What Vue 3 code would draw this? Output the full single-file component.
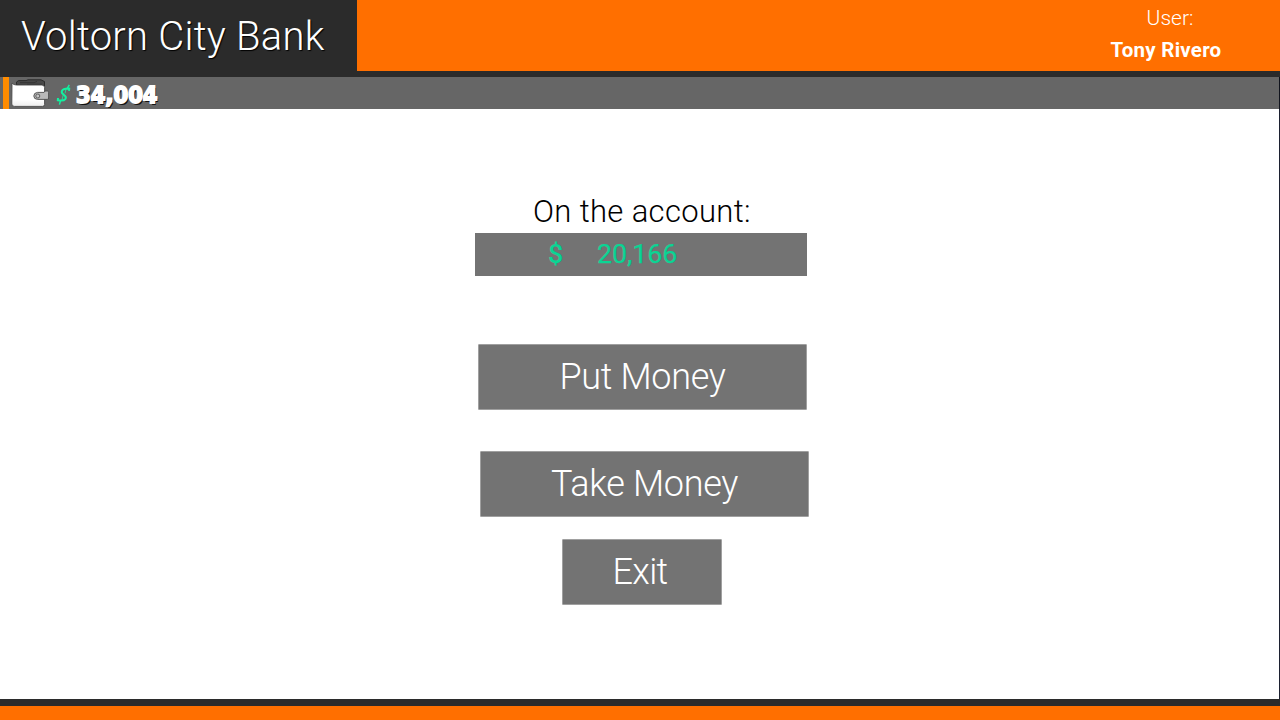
<template>
  <div class="bank">
    <header class="header">
      <div class="brand">
        <h1 class="title">Voltorn City Bank</h1>
      </div>
      <div class="user">
        <span class="user-label">User:</span>
        <span class="user-name">{{ userName }}</span>
      </div>
    </header>

    <div class="wallet-bar">
      <svg class="wallet-icon" width="40" height="32" viewBox="0 0 40 32">
        <defs>
          <linearGradient id="leather" x1="0" y1="0" x2="0" y2="1">
            <stop offset="0" stop-color="#ffffff" />
            <stop offset="0.7" stop-color="#ffffff" />
            <stop offset="1" stop-color="#ececec" />
          </linearGradient>
        </defs>
        <path d="M7.5 8 V5 L9.5 3.6 H17 L19 2.8 H32 L35.5 4.6 V9 Z" fill="#484848" stroke="#2c2c2c" stroke-width="1" />
        <path d="M11 5.7 H25 L28 4.4 M18 7.3 H33" stroke="#303030" stroke-width="0.8" fill="none" />
        <path
          d="M3 6 Q4.4 8 7.5 8 H33 Q35.6 8.2 35.6 10.6 V27.6 Q35.6 29.4 33.4 29.4 H5.4 Q2.8 29.4 2.8 27 Z"
          fill="url(#leather)"
          stroke="#484848"
          stroke-width="0.9"
        />
        <path
          d="M35.4 15 L36 14 H38.4 Q39.6 14 39.6 15.4 V21 Q39.6 22.4 38.4 22.4 H28.5 Q24.8 22.2 24.8 19 Q24.8 15.8 28.5 15.4 H35 Z"
          fill="#b9b9b9"
          stroke="#4c4c4c"
          stroke-width="0.9"
        />
        <circle cx="28.8" cy="19" r="2" fill="#c4c4c4" stroke="#555" stroke-width="0.9" />
      </svg>
      <svg class="cash-icon" width="16" height="24" viewBox="0 0 16 24">
        <path
          d="M13 6.8 L13.2 4.6 Q7 4.4 5.9 7 Q5.2 8.8 7.6 10.6 Q10.8 12.8 9.5 14.8 Q7.6 17.4 1.8 16.2 L2 14"
          fill="none"
          stroke="#14f0a0"
          stroke-width="2"
        />
        <path d="M11 4.8 L13.3 0.8 M4.6 16.4 L3.4 20.6" fill="none" stroke="#14f0a0" stroke-width="1.5" />
        <path d="M10 5 L9 9.4 M7.2 11 L6 16" fill="none" stroke="#14f0a0" stroke-width="0.8" />
      </svg>
      <span class="cash">{{ format(cash) }}</span>
    </div>

    <main class="content">
      <h2 class="account-label">On the account:</h2>
      <div class="account">
        <span class="currency">$</span>
        <span class="amount">{{ format(balance) }}</span>
      </div>
      <button class="btn put">Put Money</button>
      <button class="btn take">Take Money</button>
      <button class="btn exit">Exit</button>
    </main>

    <footer class="footer"></footer>
  </div>
</template>

<script setup>
import { ref } from 'vue'

const userName = ref('Tony Rivero')
const cash = ref(34004)
const balance = ref(20166)

const format = (value) => value.toLocaleString('en-US')
</script>

<style>
body {
  margin: 0;
  overflow: hidden;
}
</style>

<style scoped>
.bank {
  display: flex;
  flex-direction: column;
  box-sizing: border-box;
  width: 1280px;
  height: 720px;
  background: #fff;
  font-family: Roboto, sans-serif;
  font-weight: 300;
  white-space: nowrap;
}

.header {
  display: flex;
  justify-content: space-between;
  box-sizing: border-box;
  height: 77px;
  background: #ff6f00;
  border-bottom: 6px solid #2b2b2b;
}

.brand {
  box-sizing: border-box;
  width: 357px;
  padding-left: 21px;
  background: #2b2b2b;
}

.title {
  margin: 0;
  color: #fff;
  font-size: 40px;
  font-weight: 300;
  line-height: 74px;
  letter-spacing: 0.24px;
  text-shadow: 1px 1px 1px #000;
}

.user {
  display: flex;
  flex-direction: column;
  align-items: center;
  width: 228px;
  color: #fff;
}

.user-label {
  padding: 2px 0 0 8px;
  font-size: 21px;
  line-height: 32px;
}

.user-name {
  font-size: 20.5px;
  font-weight: 700;
  line-height: 32px;
  letter-spacing: 0.25px;
}

.wallet-bar {
  display: flex;
  align-items: center;
  box-sizing: border-box;
  height: 32px;
  margin-right: 1px;
  background: linear-gradient(90deg, #666 3px, #ff8c00 3px, #ff8c00 9px, #666 9px);
  box-shadow: 1px 0 #10131c;
}

.wallet-icon {
  margin-left: 9px;
}

.cash-icon {
  margin: 5px 0 0 7px;
}

.cash {
  margin: 3px 0 0 4px;
  color: #fff;
  font-family: "DejaVu Sans Condensed", "DejaVu Sans", sans-serif;
  font-size: 23.5px;
  font-stretch: condensed;
  font-weight: 700;
  line-height: 30px;
  -webkit-text-stroke: 1.8px #fff;
  text-shadow: 1.5px 1.5px 0 #111;
}

.content {
  display: flex;
  flex: 1;
  flex-direction: column;
  align-items: flex-start;
  margin-right: 1px;
  box-shadow: 1px 0 #1c2030;
}

.account-label {
  margin: 82px 0 0 533px;
  color: #000;
  font-size: 31px;
  font-weight: 300;
  line-height: 42px;
  letter-spacing: 0.35px;
}

.account {
  display: flex;
  box-sizing: border-box;
  width: 332px;
  height: 43px;
  margin-left: 475px;
  padding-left: 73px;
  background: #737373;
  color: #0ad494;
  font-size: 26.7px;
  font-weight: 400;
  line-height: 42px;
}

.currency {
  width: 49px;
  font-weight: 500;
}

.amount {
  -webkit-text-stroke: 0.25px #0ad494;
}

.btn {
  box-sizing: border-box;
  width: 329px;
  height: 66px;
  padding: 0;
  background: #737373;
  border: 1px solid #a0a0a0;
  border-radius: 1px;
  color: #fff;
  font-family: inherit;
  font-size: 36px;
  font-weight: 300;
  line-height: 64px;
  letter-spacing: -0.3px;
}

.put {
  margin: 68px 0 0 478px;
}

.take {
  margin: 41px 0 0 480px;
}

.exit {
  width: 160px;
  margin: 22px 0 0 562px;
  padding-right: 4px;
  letter-spacing: -0.7px;
}

.footer {
  box-sizing: border-box;
  height: 21px;
  background: #ff6f00;
  border-top: 7px solid #2b2b2b;
}
</style>
